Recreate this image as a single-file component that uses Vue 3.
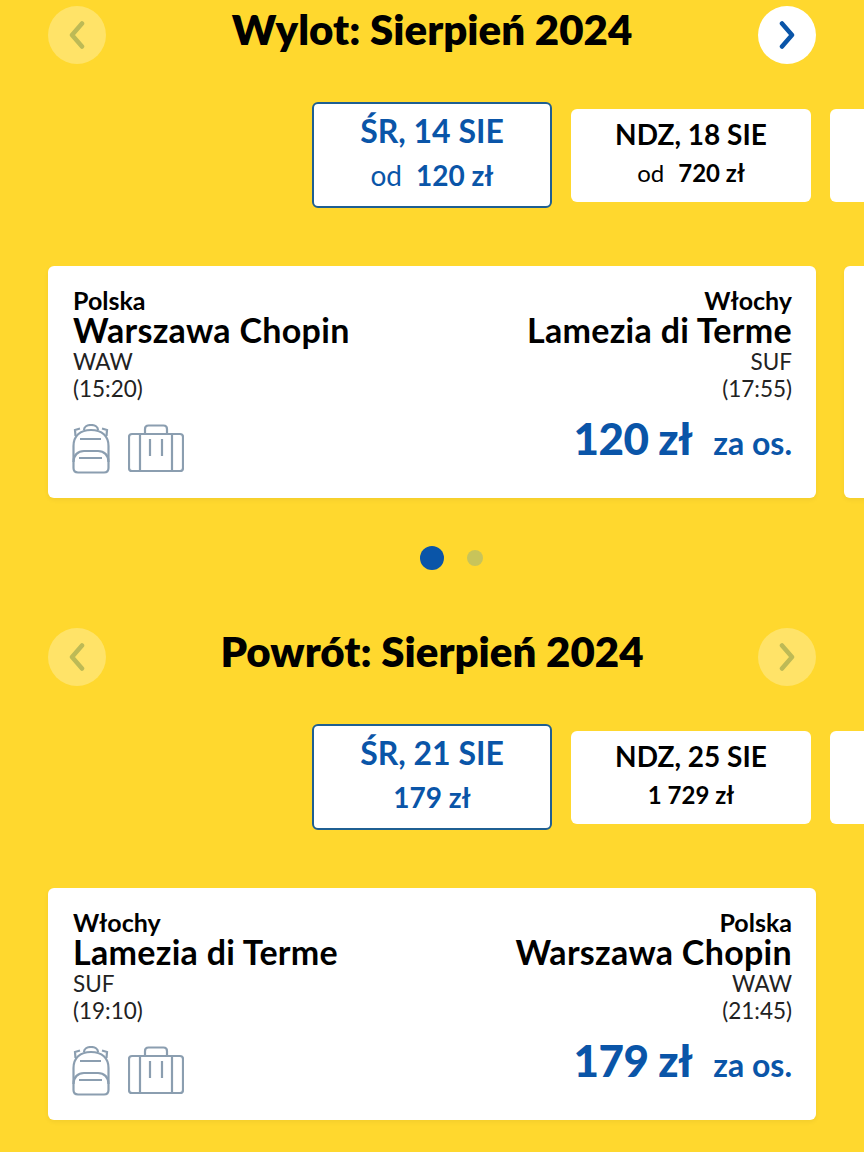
<template>
  <div class="page">
    <section v-for="s in sections" :key="s.title" class="block">
      <header class="head">
        <button class="nav off"><svg width="16" height="28" viewBox="0 0 16 28"><path d="M13 2.500 3 14l10 11.500" /></svg></button>
        <h2>{{ s.title }}</h2>
        <button class="nav" :class="{ off: !s.nextActive }"><svg width="16" height="28" viewBox="0 0 16 28"><path d="M3 2.500 13 14 3 25.500" /></svg></button>
      </header>

      <div class="dates">
        <div v-for="d in s.dates" :key="d.day" class="date" :class="{ active: d.active }">
          <div class="day">{{ d.day }}</div>
          <div class="price"><span v-if="d.from" class="from">od</span>{{ d.price }}</div>
        </div>
        <div class="date"></div>
      </div>

      <div class="flights">
        <div class="flight">
          <div class="side">
            <div class="country">{{ s.from.country }}</div>
            <div class="city">{{ s.from.city }}</div>
            <div class="info">{{ s.from.code }}</div>
            <div class="info">{{ s.from.time }}</div>
            <div class="bags">
              <svg width="38" height="50" viewBox="0 0 38 50" fill="none">
                <path d="M1.500 22C1.500 12 8 6 19 6s17.500 6 17.500 16v22c0 3-1.500 4.500-4.500 4.500H6c-3 0-4.500-1.500-4.500-4.500V22Z" />
                <path d="M1.500 38c0-7 4.500-11 10.500-11h14c6 0 10.500 4 10.500 11" />
                <path d="M8 15h21M7 34h23" />
                <path d="M12 6c0-3 3-5 7-5s7 2 7 5M3.500 12 3 6l5-1.500M34.500 12 35 6l-5-1.500" />
              </svg>
              <svg width="56" height="50" viewBox="0 0 56 50" fill="none">
                <rect x="1" y="10" width="54" height="37" rx="3" />
                <path d="M12 10v37M44 10v37M22 15v17M34 15v17" />
                <path d="M17 10V5c0-2 1-3.500 3.500-3.500h15c2.500 0 3.500 1.500 3.500 3.500v5" />
              </svg>
            </div>
          </div>
          <div class="side right">
            <div class="country">{{ s.to.country }}</div>
            <div class="city">{{ s.to.city }}</div>
            <div class="info">{{ s.to.code }}</div>
            <div class="info">{{ s.to.time }}</div>
            <div class="fare"><strong>{{ s.fare }}</strong><span>za os.</span></div>
          </div>
        </div>
        <div v-if="s.dots" class="flight"></div>
      </div>

      <div v-if="s.dots" class="dots"><i class="on"></i><i></i></div>
    </section>
  </div>
</template>

<script setup>
const waw = { country: "Polska", city: "Warszawa Chopin", code: "WAW" };
const suf = { country: "Włochy", city: "Lamezia di Terme", code: "SUF" };

const sections = [
  {
    title: "Wylot: Sierpień 2024",
    nextActive: true,
    dots: true,
    dates: [
      { day: "ŚR, 14 SIE", price: "120 zł", from: true, active: true },
      { day: "NDZ, 18 SIE", price: "720 zł", from: true },
    ],
    from: { ...waw, time: "(15:20)" },
    to: { ...suf, time: "(17:55)" },
    fare: "120 zł",
  },
  {
    title: "Powrót: Sierpień 2024",
    nextActive: false,
    dots: false,
    dates: [
      { day: "ŚR, 21 SIE", price: "179 zł", active: true },
      { day: "NDZ, 25 SIE", price: "1 729 zł" },
    ],
    from: { ...suf, time: "(19:10)" },
    to: { ...waw, time: "(21:45)" },
    fare: "179 zł",
  },
];
</script>

<style>
html, body { margin: 0; background: #ffd82e; overflow: hidden; }
</style>

<style scoped>
.page {
  height: 1152px;
  overflow: hidden;
  background: #ffd82e;
  font-family: Lato, "Noto Sans", sans-serif;
  color: #000;
}
.block { height: 622px; padding-top: 6px; box-sizing: border-box; }
.head {
  display: flex;
  align-items: center;
  justify-content: space-between;
  padding: 0 48px;
  height: 58px;
}
.head h2 { margin: -12px 0 0; font-size: 42px; font-weight: 800; line-height: 50px; }
.nav {
  width: 58px;
  height: 58px;
  padding: 0;
  border: none;
  border-radius: 50%;
  background: #fff;
  display: flex;
  align-items: center;
  justify-content: center;
}
.nav path { fill: none; stroke: #0a55a8; stroke-width: 4.500; stroke-linecap: round; stroke-linejoin: round; }
.nav.off { background: #ffe368; }
.nav.off path { stroke: #bdba56; }

.dates {
  display: flex;
  align-items: center;
  gap: 19px;
  height: 106px;
  margin-top: 38px;
  padding-left: 312px;
  overflow: hidden;
}
.date {
  flex: 0 0 240px;
  height: 93px;
  box-sizing: border-box;
  background: #fff;
  border-radius: 6px;
  text-align: center;
  padding-top: 7px;
}
.date.active {
  height: 106px;
  border: 2px solid #1f5f92;
  color: #0a55a8;
  padding-top: 9px;
}
.day { font-size: 28px; font-weight: 700; line-height: 36px; }
.price { font-size: 24px; font-weight: 700; line-height: 40px; margin-top: 1px; }
.from { font-weight: 400; margin-right: 14px; }
.active .day { font-size: 32px; }
.active .price { margin-top: 6px; font-size: 28px; }

.flights { display: flex; gap: 28px; margin-top: 58px; padding-left: 48px; overflow: hidden; padding-bottom: 6px; }
.flight {
  flex: 0 0 768px;
  height: 232px;
  box-sizing: border-box;
  background: #fff;
  border-radius: 6px;
  box-shadow: 0 2px 5px rgba(0, 0, 0, 0.05);
  padding: 22px 24px 0 25px;
  display: flex;
  justify-content: space-between;
}
.side { display: flex; flex-direction: column; }
.right { text-align: right; align-items: flex-end; }
.country { font-size: 25px; font-weight: 700; line-height: 24px; }
.city { font-size: 34px; font-weight: 700; line-height: 36px; letter-spacing: 0.3px; }
.info { font-size: 22.500px; line-height: 27px; color: #222; }
.bags { display: flex; align-items: flex-end; gap: 18px; margin-top: 22px; margin-left: -1px; }
.bags svg { stroke: #8b9eb0; stroke-width: 2.200; }
.fare { display: flex; align-items: baseline; gap: 21px; color: #0a55a8; margin-top: 7px; font-weight: 700; }
.fare strong { font-size: 44px; line-height: 58px; letter-spacing: -0.6px; }
.fare span { font-size: 32px; }

.dots { display: flex; align-items: center; gap: 23px; margin-top: 42px; padding-left: 420px; }
.dots i { width: 16px; height: 16px; border-radius: 50%; background: #c8c45a; }
.dots i.on { width: 24px; height: 24px; background: #0a55a8; }
</style>
